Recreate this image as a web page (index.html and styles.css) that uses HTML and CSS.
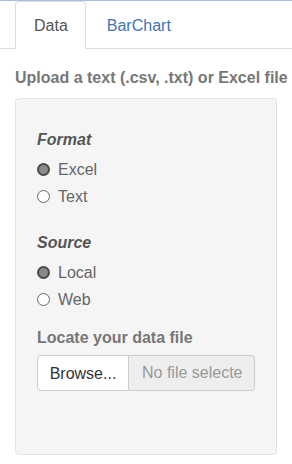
FILE: index.html
```html
<!DOCTYPE html>
<html lang="en">
<head>
    <meta charset="UTF-8">
    <meta name="viewport" content="width=device-width, initial-scale=1.0">
    <title>Data Upload</title>
    <link rel="stylesheet" href="styles.css">
</head>
<body>
    <ul class="nav-tabs">
        <li class="active"><a href="#data">Data</a></li>
        <li><a href="#barchart">BarChart</a></li>
    </ul>

    <div class="tab-content">
        <h4 class="upload-title">Upload a text (.csv, .txt) or Excel file</h4>

        <div class="well">
            <div class="form-group">
                <label class="group-label">Format</label>
                <label class="radio"><input type="radio" name="format" value="excel" checked> <span>Excel</span></label>
                <label class="radio"><input type="radio" name="format" value="text"> <span>Text</span></label>
            </div>

            <div class="form-group">
                <label class="group-label">Source</label>
                <label class="radio"><input type="radio" name="source" value="local" checked> <span>Local</span></label>
                <label class="radio"><input type="radio" name="source" value="web"> <span>Web</span></label>
            </div>

            <div class="form-group file-group">
                <label class="control-label">Locate your data file</label>
                <div class="input-group">
                    <label class="btn-browse">Browse...</label>
                    <input type="text" class="file-name" placeholder="No file selected" readonly>
                </div>
            </div>
        </div>
    </div>
</body>
</html>
```

FILE: styles.css
```css
body {
    font-family: "Liberation Sans", Arial, sans-serif;
    font-size: 16px;
    line-height: 23px;
    color: #333;
    margin: 0;
    border-top: 1px solid #a9bfe4;
    background: #fff;
}
.nav-tabs {
    display: flex;
    list-style: none;
    margin: 0;
    padding: 0 0 0 15px;
    border-bottom: 1px solid #ddd;
}
.nav-tabs li {
    margin-right: 2px;
    margin-bottom: -1px;
}
.nav-tabs a {
    display: block;
    padding: 12px 17px 11px 18px;
    border: 1px solid transparent;
    border-radius: 4px 4px 0 0;
    text-decoration: none;
    color: #3d74b9;
}
.nav-tabs .active a {
    color: #555;
    background: #fff;
    border-color: #ddd;
    border-bottom-color: transparent;
}
.tab-content {
    padding: 0 15px;
}
.upload-title {
    margin: 17px 0 9px;
    font-size: 16px;
    font-weight: bold;
    color: #777;
    white-space: nowrap;
}
.well {
    background: #f5f5f5;
    border: 1px solid #e3e3e3;
    border-radius: 4px;
    padding: 29px 21px 63px;
}
.form-group {
    margin-bottom: 23px;
}
.form-group + .file-group {
    margin-top: -8px;
}
.group-label {
    display: block;
    font-style: italic;
    font-weight: bold;
    color: #555;
    margin-bottom: 7px;
}
.radio {
    display: flex;
    align-items: center;
    color: #666;
    margin-bottom: 4px;
}
.radio input {
    appearance: none;
    -webkit-appearance: none;
    box-sizing: border-box;
    flex-shrink: 0;
    width: 13px;
    height: 13px;
    margin: 0 8px 0 0;
    border: 1px solid #666;
    border-radius: 50%;
    background: #fff;
}
.radio input:checked {
    border: 2px solid #4a4a4a;
    background: #8a8a8a;
}
.file-group {
    margin-bottom: 0;
}
.control-label {
    display: block;
    font-weight: bold;
    color: #777;
    margin-bottom: 6px;
}
.input-group {
    display: flex;
    width: 218px;
    height: 36px;
}
.btn-browse {
    display: flex;
    align-items: center;
    justify-content: center;
    width: 92px;
    background: #fff;
    color: #333;
    border: 1px solid #ccc;
    border-radius: 4px 0 0 4px;
    box-sizing: border-box;
}
.file-name {
    flex: 1;
    min-width: 0;
    box-sizing: border-box;
    height: 36px;
    padding: 0 12px 0 13px;
    font-family: inherit;
    font-size: 16px;
    color: #555;
    background: #eee;
    border: 1px solid #ccc;
    border-left: none;
    border-radius: 0 4px 4px 0;
    outline: none;
}
.file-name::placeholder {
    color: #999;
}
```
